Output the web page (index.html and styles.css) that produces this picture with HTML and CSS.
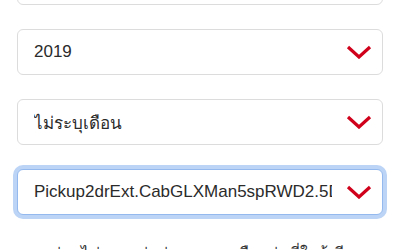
FILE: index.html
```html
<!DOCTYPE html>
<html lang="th">
<head>
  <meta charset="UTF-8" />
  <meta name="viewport" content="width=device-width, initial-scale=1.0"/>
  <title>เลือกรุ่นรถ</title>
  <link rel="stylesheet" href="styles.css">
</head>
<body>

  <main class="car-form">
    <div class="field field-top"></div>

    <div class="field">
      <span class="field-value">2019</span>
      <svg class="chevron" viewBox="0 0 26 14"><polyline points="2,2 13,12 24,2"/></svg>
    </div>

    <div class="field">
      <span class="field-value">ไม่ระบุเดือน</span>
      <svg class="chevron" viewBox="0 0 26 14"><polyline points="2,2 13,12 24,2"/></svg>
    </div>

    <div class="field field-focus">
      <span class="field-value">Pickup2drExt.CabGLXMan5spRWD2.5D</span>
      <svg class="chevron" viewBox="0 0 26 14"><polyline points="2,2 13,12 24,2"/></svg>
    </div>

    <p class="note">หากท่านไม่ทราบรุ่นย่อย กรุณาเลือกรุ่นที่ใกล้เคียง</p>
  </main>

</body>
</html>
```

FILE: styles.css
```css
body {
  font-family: "Liberation Sans", "Noto Sans", sans-serif;
  margin: 0;
  padding: 0;
  background: #fff;
  color: #333;
  overflow: hidden;
}

.car-form {
  display: flex;
  flex-direction: column;
  gap: 24px;
  padding: 0 17px;
}

.field {
  box-sizing: border-box;
  height: 46px;
  display: flex;
  align-items: center;
  gap: 14px;
  padding: 0 10px 0 16px;
  border: 1px solid #dcdcdc;
  border-radius: 6px;
  background: #fff;
}

.field-top {
  margin-top: -41px;
}

.field-value {
  flex: 1;
  font-size: 17px;
  white-space: nowrap;
  overflow: hidden;
  color: #2b2b2b;
}

.chevron {
  width: 26px;
  height: 14px;
  flex-shrink: 0;
  fill: none;
  stroke: #d0021b;
  stroke-width: 3.2;
}

.field-focus {
  border-color: #93b9ee;
  box-shadow: 0 0 0 4px #bcd4f5;
}

.note {
  margin: 2px 0 0 3px;
  font-size: 16px;
  white-space: nowrap;
  overflow: hidden;
  color: #333;
}
```
